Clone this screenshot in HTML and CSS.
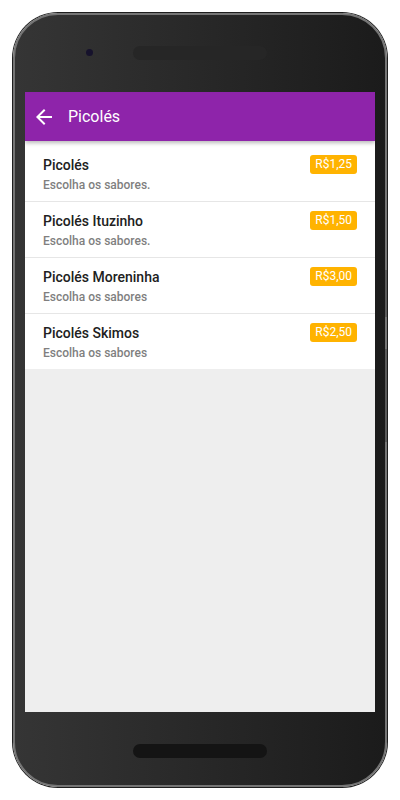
FILE: index.html
```html
<!DOCTYPE html>
<html lang="pt-BR">
<head>
    <meta charset="UTF-8">
    <meta name="viewport" content="width=device-width, initial-scale=1.0">
    <title>Picolés</title>
    <link rel="stylesheet" href="styles.css">
</head>
<body>
    <div class="device">
        <!-- Side buttons -->
        <span class="side-btn power"></span>
        <span class="side-btn volume"></span>

        <div class="bezel-top">
            <span class="camera"></span>
            <span class="speaker"></span>
        </div>

        <div class="screen">
            <header class="toolbar">
                <svg class="back" viewBox="0 0 24 24" width="24" height="24">
                    <path d="M20 11H7.83l5.59-5.59L12 4l-8 8 8 8 1.41-1.41L7.83 13H20v-2z" fill="#fff"/>
                </svg>
                <span class="toolbar-title">Picolés</span>
            </header>

            <ul class="list">
                <li class="item">
                    <div class="item-text">
                        <div class="item-title">Picolés</div>
                        <div class="item-sub">Escolha os sabores.</div>
                    </div>
                    <span class="price">R$1,25</span>
                </li>
                <li class="item">
                    <div class="item-text">
                        <div class="item-title">Picolés Ituzinho</div>
                        <div class="item-sub">Escolha os sabores.</div>
                    </div>
                    <span class="price">R$1,50</span>
                </li>
                <li class="item">
                    <div class="item-text">
                        <div class="item-title">Picolés Moreninha</div>
                        <div class="item-sub">Escolha os sabores</div>
                    </div>
                    <span class="price">R$3,00</span>
                </li>
                <li class="item">
                    <div class="item-text">
                        <div class="item-title">Picolés Skimos</div>
                        <div class="item-sub">Escolha os sabores</div>
                    </div>
                    <span class="price">R$2,50</span>
                </li>
            </ul>
        </div>

        <div class="bezel-bottom">
            <span class="speaker bottom"></span>
        </div>
    </div>
</body>
</html>
```

FILE: styles.css
```css
body {
    margin: 0;
    background-color: #fff;
    font-family: Roboto, 'Noto Sans', Arial, sans-serif;
}
.device {
    position: relative;
    box-sizing: border-box;
    width: 374px;
    height: 774px;
    margin: 13px;
    padding: 0 10px;
    border: 2px solid #757575;
    border-radius: 45px;
    box-shadow: 0 0 0 1px #1e1e1e;
    background: linear-gradient(to right, #353535, #1b1b1b);
    display: flex;
    flex-direction: column;
}

/* Side buttons */
.side-btn {
    position: absolute;
    right: -2px;
    width: 2px;
    background-color: #5a5a5a;
}
.side-btn.power {
    top: 255px;
    height: 47px;
}
.side-btn.volume {
    top: 334px;
    height: 93px;
}

/* Bezels */
.bezel-top {
    height: 77px;
    box-sizing: border-box;
    padding-top: 31px;
    display: grid;
    grid-template-columns: 1fr 134px 1fr;
    align-items: start;
}
.camera {
    justify-self: end;
    margin-right: 40px;
    margin-top: 3px;
    width: 7px;
    height: 7px;
    border-radius: 50%;
    background-color: #16122c;
}
.speaker {
    display: block;
    width: 134px;
    height: 14px;
    border-radius: 7px;
    background-color: #262626;
}
.bezel-bottom {
    flex: 1;
    display: flex;
    justify-content: center;
    padding-top: 32px;
}
.speaker.bottom {
    background-color: #141414;
}

/* Screen */
.screen {
    height: 620px;
    background-color: #eeeeee;
    display: flex;
    flex-direction: column;
    overflow: hidden;
}
.toolbar {
    position: relative;
    z-index: 2;
    height: 49px;
    flex-shrink: 0;
    background-color: #8e24aa;
    display: flex;
    align-items: center;
    padding-left: 7px;
    box-shadow: 0 2px 4px rgba(0, 0, 0, 0.28);
}
.back {
    display: block;
}
.toolbar-title {
    margin-left: 12px;
    color: #fff;
    font-size: 16px;
    font-weight: 400;
}

.list {
    list-style: none;
    margin: 0;
    padding: 5px 0 0;
    background-color: #fff;
}
.item {
    height: 55px;
    box-sizing: content-box;
    padding: 0 18px;
    display: flex;
    justify-content: space-between;
    align-items: flex-start;
    border-bottom: 1px solid #e6e6e6;
}
.item:last-child {
    border-bottom: none;
}
.item-text {
    padding-top: 9px;
}
.item-title {
    font-size: 14px;
    line-height: 20px;
    font-weight: 500;
    color: #212121;
}
.item-sub {
    margin-top: 1px;
    font-size: 12px;
    line-height: 18px;
    font-weight: 500;
    color: #7f7f7f;
}
.price {
    margin-top: 9px;
    padding: 0 5px;
    height: 19px;
    line-height: 19px;
    border-radius: 3px;
    background-color: #ffb300;
    color: #fff;
    font-size: 12px;
    font-weight: 400;
}
```
